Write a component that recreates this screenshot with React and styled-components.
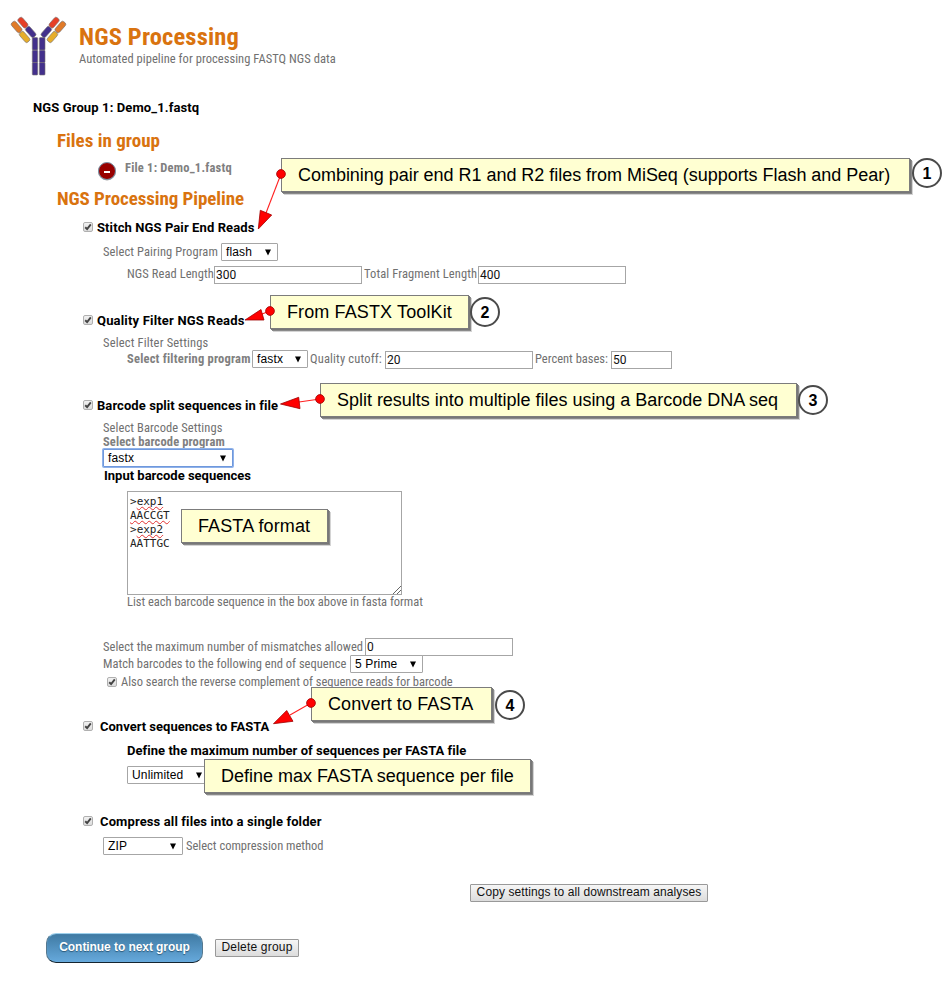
import React from "react";
import styled, { createGlobalStyle, css } from "styled-components";

const Global = createGlobalStyle`
  *, *::before, *::after { box-sizing: border-box; }
  body { margin: 0; background: #fff; font-family: Roboto, sans-serif; }
`;

const Page = styled.main`
  position: relative;
  width: 944px;
  height: 989px;
  overflow: hidden;
  background: #fff;
`;

const Header = styled.header`
  display: flex;
  height: 97px;
  padding: 10px 0 0 6px;
`;

const Logo = styled.svg`
  width: 64px;
  height: 72px;
  flex: none;
`;

const HeaderText = styled.div`
  display: flex;
  flex-direction: column;
  padding: 12px 0 0 9px;
`;

const Row = styled.div`
  display: flex;
  align-items: center;
  height: ${(p) => p.$h || 18}px;
  margin-top: ${(p) => p.$mt || 0}px;
  padding-left: ${(p) => p.$x || 0}px;
`;

const tones = {
  title: css`font-size: 24.5px; line-height: 27px; font-weight: 700; font-stretch: 75%; color: #d9730f;`,
  section: css`font-size: 19px; padding-top: 0; font-weight: 700; font-stretch: 75%; color: #d9730f;`,
  heading: css`font-size: 13px; font-weight: 700; color: #000;`,
  strong: css`font-size: 12.5px; font-weight: 700; font-stretch: 75%; color: #808080;`,
  plain: css`font-size: 12.5px; font-weight: 400; font-stretch: 75%; color: #707070;`,
};

const Text = styled.span`
  flex: none;
  display: block;
  width: ${(p) => p.$w}px;
  margin: 0 0 0 ${(p) => p.$ml || 0}px;
  padding-top: 1px;
  line-height: 1.35;
  white-space: nowrap;
  letter-spacing: ${(p) => p.$ls || 0}px;
  ${(p) => tones[p.$tone || "plain"]}
`;

const Check = styled.span`
  flex: none;
  display: flex;
  align-items: center;
  justify-content: center;
  width: 10px;
  height: 10px;
  border: 1px solid #b0b0b0;
  border-radius: 2px;
  background: linear-gradient(#f1f1f1, #dcdcdc);
`;

function Checkbox() {
  return (
    <Check role="checkbox" aria-checked="true">
      <svg width="8" height="8" viewBox="0 0 8 8">
        <path d="M1.2 4.2 3.1 6 6.8 1.3" fill="none" stroke="#444" strokeWidth="1.9" />
      </svg>
    </Check>
  );
}

const SelectBox = styled.span`
  flex: none;
  display: flex;
  align-items: center;
  justify-content: space-between;
  width: ${(p) => p.$w}px;
  height: 18px;
  margin-left: ${(p) => p.$ml || 0}px;
  padding: 0 6px 0 4px;
  border: 1px solid ${(p) => (p.$focus ? "#6f98dc" : "#a6a6a6")};
  border-radius: 1px;
  box-shadow: ${(p) => (p.$focus ? "0 0 0 1px #8fb2ea" : "none")};
  background: #fff;
  color: #000;
  font: 12px/16px "Liberation Sans", Arial, sans-serif;
  letter-spacing: 0.15px;
`;

function Select({ children, ...rest }) {
  return (
    <SelectBox {...rest}>
      {children}
      <svg width="6" height="7" viewBox="0 0 6 7">
        <path d="M0 0.5h6L3 6.5z" fill="#000" />
      </svg>
    </SelectBox>
  );
}

const Input = styled.span`
  flex: none;
  width: ${(p) => p.$w || 148}px;
  height: 18px;
  margin-left: ${(p) => p.$ml || 0}px;
  margin-top: ${(p) => p.$mt || 0}px;
  padding-left: 1px;
  border: 1px solid #a6a6a6;
  color: #111;
  font-size: 12px;
  line-height: 17px;
`;

const TextArea = styled.div`
  position: relative;
  width: 275px;
  height: 104px;
  margin: 6px 0 0 127px;
  padding: 3px 2px;
  border: 1px solid #a6a6a6;
  font: 11px/14px "DejaVu Sans Mono", monospace;
  color: #222;
`;

const Misspelled = styled.span`
  text-decoration: underline wavy #e03030 1px;
  text-underline-offset: 1px;
  text-decoration-skip-ink: none;
`;

const Grip = styled.svg`
  position: absolute;
  right: 0;
  bottom: 0;
  width: 8px;
  height: 8px;
`;

const RemoveIcon = styled.svg`
  width: 20px;
  height: 20px;
  flex: none;
  margin-top: 5px;
`;

const PlainButton = styled.button`
  height: 18px;
  width: ${(p) => p.$w}px;
  padding: 0 0 1px;
  border: 1px solid #999;
  border-radius: 1px;
  background: linear-gradient(#f6f6f6, #dcdcdc);
  font: 12px/15px "Liberation Sans", Arial, sans-serif;
  letter-spacing: ${(p) => p.$ls || 0}px;
  color: #111;
  white-space: nowrap;
`;

const PrimaryButton = styled.button`
  width: 157px;
  height: 30px;
  margin-right: 12px;
  padding: 0 0 3px;
  border: 1px solid #55788f;
  border-top-color: #9ed0ec;
  border-bottom-color: #14242f;
  border-radius: 10px;
  background: linear-gradient(#3f7aa3, #66a9dc);
  box-shadow: inset 0 0 1px #7ab8e0;
  color: #fff;
  font: bold 12px/18px "Liberation Sans", Arial, sans-serif;
  letter-spacing: -0.07px;
  text-shadow: 0 1px 1px #2a5878;
  white-space: nowrap;
`;

const Annotations = styled.div`
  position: absolute;
  inset: 0;
`;

const Callout = styled.div`
  position: absolute;
  left: ${(p) => p.$x}px;
  top: ${(p) => p.$y}px;
  width: ${(p) => p.$w}px;
  height: 34px;
  padding-left: 16px;
  border: 1px solid #7c7c7c;
  background: #ffffd2;
  box-shadow: 1px 1px 0 #777, 2px 2px 0 #8a8a8a, 3px 3px 0 #d4d4d4;
  color: #000;
  font: 18px/32px "Liberation Sans", Arial, sans-serif;
  letter-spacing: ${(p) => p.$ls || 0}px;
  white-space: nowrap;
`;

const Step = styled.div`
  position: absolute;
  left: ${(p) => p.$x}px;
  top: ${(p) => p.$y}px;
  width: 30px;
  height: 30px;
  border: 2px solid #4a4a4a;
  border-radius: 50%;
  background: #fff;
  color: #000;
  font: bold 16px/27px "Liberation Sans", Arial, sans-serif;
  text-align: center;
`;

const Arrows = styled.svg`
  position: absolute;
  left: 0;
  top: 0;
`;

const arrows = [
  { dot: [281, 174], base: [266, 213], head: "258.3,229 260.3,210.3 271.7,215" },
  { dot: [270, 311], base: [262, 314], head: "245,320 261,309.5 264,320" },
  { dot: [320, 399], base: [299, 402], head: "280.5,404 298.7,397.3 300,408.7" },
  { dot: [311, 703], base: [290, 715], head: "273.5,723.7 286.7,710.5 293,721.3" },
];

const arms = [
  { x: 30.7, y: 32, w: 12, fill: "#43308c" },
  { x: 22.9, y: 22.6, w: 11.5, fill: "#e63f26" },
  { x: 16.6, y: 27, w: 12.5, fill: "#e07a28" },
  { x: 24.6, y: 37, w: 12, fill: "#e6ad2b" },
];

function AntibodyLogo() {
  const half = arms.map((a) => (
    <rect key={a.fill} x={a.x - a.w / 2} y={a.y - 2.8} width={a.w} height="5.6" rx="2"
      transform={`rotate(49 ${a.x} ${a.y})`} fill={a.fill} />
  ));
  return (
    <Logo viewBox="6 10 64 72" stroke="#77706f" strokeWidth="0.6">
      {half}
      <g transform="translate(77 0) scale(-1 1)">{half}</g>
      {[37.6, 50.2, 62.6].map((y) => (
        <g key={y} fill="#43308c">
          <rect x="32.3" y={y} width="5.4" height="12.4" rx="0.8" />
          <rect x="39.4" y={y} width="5.6" height="12.4" rx="0.8" />
        </g>
      ))}
    </Logo>
  );
}

export default function App() {
  return (
    <>
      <Global />
      <Page>
        <Header>
          <AntibodyLogo />
          <HeaderText>
            <Text as="h1" $tone="title" $ls={0.15} $w={160}>NGS Processing</Text>
            <Text $ls={0.05} $w={257}>Automated pipeline for processing FASTQ NGS data</Text>
          </HeaderText>
        </Header>
        <Row $x={33} $h={20}><Text $tone="heading" $ls={0.12} $w={167}>NGS Group 1: Demo_1.fastq</Text></Row>
        <Row $x={57} $h={24} $mt={12}><Text $tone="section" $w={103}>Files in group</Text></Row>
        <Row $x={97} $h={20} $mt={5}>
          <RemoveIcon viewBox="0 0 20 20">
            <circle cx="10" cy="10.5" r="9" fill="#444" opacity=".5" />
            <circle cx="10" cy="10" r="8.5" fill="#980000" stroke="#7b97ad" />
            <rect x="7" y="10" width="6" height="2" fill="#fff" />
          </RemoveIcon>
          <Text $tone="strong" $ml={8} $ls={0.2} $w={105}>File 1: Demo_1.fastq</Text>
        </Row>
        <Row $x={57} $h={24} $mt={9}><Text $tone="section" $ls={-0.08} $w={187}>NGS Processing Pipeline</Text></Row>
        <Row $x={83} $mt={7}><Checkbox /><Text $tone="heading" $ml={4} $ls={0.1} $w={158}>Stitch NGS Pair End Reads</Text></Row>
        <Row $x={103} $mt={7}><Text $ls={0.09} $w={115}>Select Pairing Program</Text><Select $w={57} $ml={3}>flash</Select></Row>
        <Row $x={127} $mt={4}>
          <Text $ls={0.07} $w={87}>NGS Read Length</Text><Input $mt={2}>300</Input>
          <Text $ml={2} $ls={0.11} $w={114}>Total Fragment Length</Text><Input $mt={2}>400</Input>
        </Row>
        <Row $x={83} $mt={28}><Checkbox /><Text $tone="heading" $ml={4} $ls={0.18} $w={148}>Quality Filter NGS Reads</Text></Row>
        <Row $x={103} $mt={5}><Text $ls={0.16} $w={106}>Select Filter Settings</Text></Row>
        <Row $x={127} $mt={-2}>
          <Text $tone="strong" $ls={0.2} $w={122}>Select filtering program</Text><Select $w={56} $ml={3}>fastx</Select>
          <Text $ml={2} $ls={0.16} $w={73}>Quality cutoff:</Text><Input $ml={2} $mt={2}>20</Input>
          <Text $ml={2} $w={73}>Percent bases:</Text><Input $ml={3} $mt={2} $w={61}>50</Input>
        </Row>
        <Row $x={83} $mt={28}><Checkbox /><Text $tone="heading" $ml={4} $ls={0.07} $w={181}>Barcode split sequences in file</Text></Row>
        <Row $x={103} $mt={7} $h={14}><Text $ls={0.09} $w={120}>Select Barcode Settings</Text></Row>
        <Row $x={103} $h={14}><Text $tone="strong" $ls={0.12} $w={121}>Select barcode program</Text></Row>
        <Row $x={103}><Select $w={130} $focus>fastx</Select></Row>
        <Row $x={104} $mt={-1} $h={19}><Text $tone="heading" $w={147}>Input barcode sequences</Text></Row>
        <TextArea>
          <div>&gt;<Misspelled>exp1</Misspelled></div>
          <div><Misspelled>AACCGT</Misspelled></div>
          <div>&gt;<Misspelled>exp2</Misspelled></div>
          <div>AATTGC</div>
          <Grip viewBox="0 0 8 8"><path d="M0 8 8 0M4 8l4-4" stroke="#666" /></Grip>
        </TextArea>
        <Row $x={127} $h={14}><Text $ls={-0.02} $w={296}>List each barcode sequence in the box above in fasta format</Text></Row>
        <Row $x={103} $mt={29}><Text $ls={0.04} $w={260}>Select the maximum number of mismatches allowed</Text><Input $ml={2}>0</Input></Row>
        <Row $x={103} $mt={-1}><Text $w={244}>Match barcodes to the following end of sequence</Text><Select $w={73} $ml={3}>5 Prime</Select></Row>
        <Row $x={107}><Checkbox /><Text $ml={4} $ls={-0.02} $w={332}>Also search the reverse complement of sequence reads for barcode</Text></Row>
        <Row $x={83} $mt={26}><Checkbox /><Text $tone="heading" $ml={7} $w={170}>Convert sequences to FASTA</Text></Row>
        <Row $x={127} $mt={6}><Text $tone="heading" $ls={0.045} $w={339}>Define the maximum number of sequences per FASTA file</Text></Row>
        <Row $x={127} $mt={7}><Select $w={82}>Unlimited</Select></Row>
        <Row $x={83} $mt={28}><Checkbox /><Text $tone="heading" $ml={7} $ls={0.12} $w={222}>Compress all files into a single folder</Text></Row>
        <Row $x={103} $mt={7}><Select $w={80}>ZIP</Select><Text $ml={3} $w={138}>Select compression method</Text></Row>
        <Row $x={470} $mt={29}><PlainButton $ls={0.1} $w={238}>Copy settings to all downstream analyses</PlainButton></Row>
        <Row $x={46} $h={30} $mt={31}>
          <PrimaryButton>Continue to next group</PrimaryButton>
          <PlainButton $ls={0.2} $w={84}>Delete group</PlainButton>
        </Row>
        <Annotations>
          <Callout $x={281} $y={158} $w={629} $ls={-0.03}>Combining pair end R1 and R2 files from MiSeq (supports Flash and Pear)</Callout>
          <Callout $x={270} $y={295} $w={199} $ls={0.12}>From FASTX ToolKit</Callout>
          <Callout $x={320} $y={383} $w={477} $ls={-0.02}>Split results into multiple files using a Barcode DNA seq</Callout>
          <Callout $x={181} $y={509} $w={147} $ls={0.12}>FASTA format</Callout>
          <Callout $x={311} $y={687} $w={181} $ls={0.1}>Convert to FASTA</Callout>
          <Callout $x={204} $y={759} $w={327}>Define max FASTA sequence per file</Callout>
          <Step $x={912} $y={158}>1</Step>
          <Step $x={470} $y={297}>2</Step>
          <Step $x={798} $y={385}>3</Step>
          <Step $x={495} $y={690}>4</Step>
          <Arrows width="944" height="989">
            {arrows.map(({ dot, base, head }) => (
              <g key={head} stroke="#a00000" strokeWidth="0.8" fill="#ff0000">
                <path d={`M${dot} L${base}`} stroke="#ff2020" strokeWidth="1.1" />
                <circle cx={dot[0]} cy={dot[1]} r="4.4" />
                <polygon points={head} />
              </g>
            ))}
          </Arrows>
        </Annotations>
      </Page>
    </>
  );
}
